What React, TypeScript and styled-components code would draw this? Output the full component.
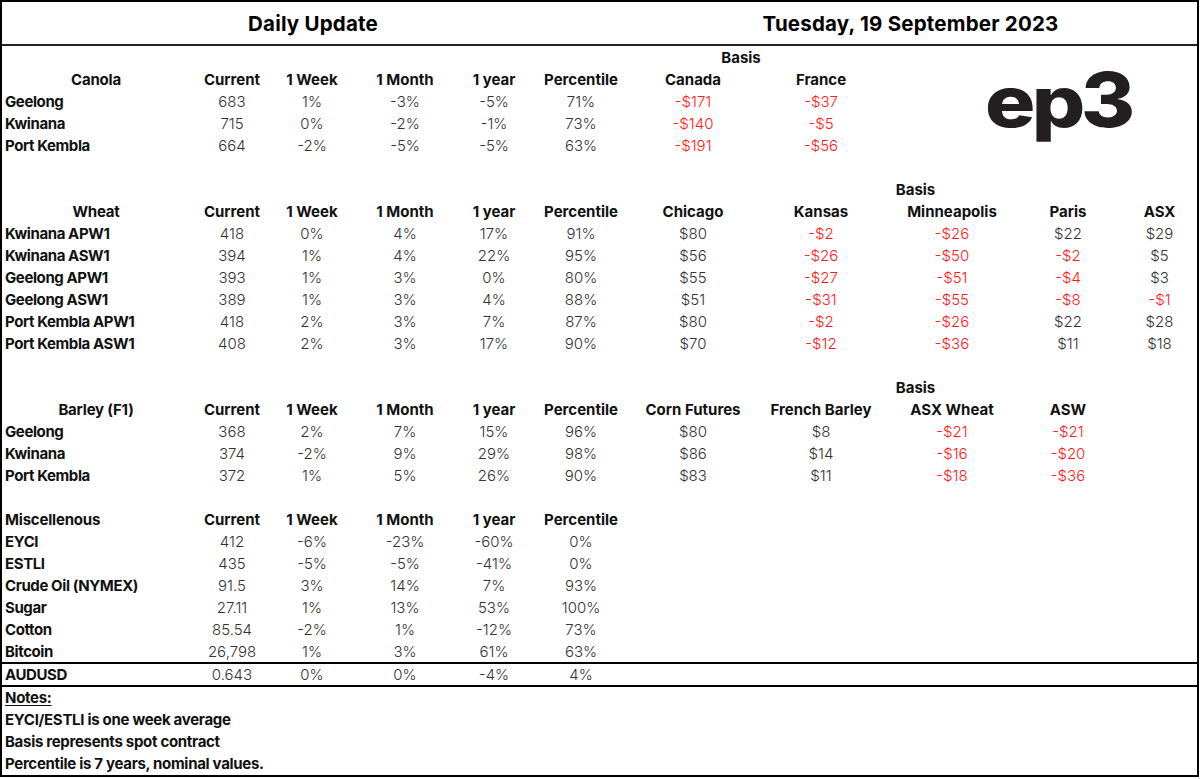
import styled, { createGlobalStyle } from "styled-components";

const GlobalStyle = createGlobalStyle`
    html, body {
        margin: 0;
        padding: 0;
        background: #ffffff;
    }
    body {
        font-family: Inter, "Liberation Sans", sans-serif;
        color: #111;
    }
`;

const COLS = "188px 84px 76px 110px 68px 106px 118px 138px 124px 108px 75px";

const Sheet = styled.div`
    width: 1199px;
    box-sizing: border-box;
    border: 2px solid #000;
`;

const TitleBar = styled.div`
    display: grid;
    grid-template-columns: 622px 1fr;
    height: 42px;
    align-items: center;
    border-bottom: 2px solid #222;
`;

const Title = styled.div`
    text-align: center;
    font-weight: 700;
    font-size: 20.5px;
    letter-spacing: 0.2px;
    color: #000;
`;

const Section = styled.div`
    display: grid;
    grid-template-columns: ${COLS};
    grid-auto-rows: 22px;
    align-items: center;
`;

const Gap = styled.div`
    grid-column: 1 / span 8;
`;

const BasisTitle = styled.div<{ $span: string; $shift?: number }>`
    grid-column: ${(p) => p.$span};
    text-align: center;
    font-weight: 700;
    font-size: 15px;
    padding-right: ${(p) => p.$shift ?? 0}px;
`;

const RowLabel = styled.div`
    grid-column: 1;
    padding-left: 3px;
    font-weight: 700;
    font-size: 15px;
    letter-spacing: -0.4px;
    white-space: nowrap;
`;

const GroupHead = styled.div<{ $left?: boolean }>`
    grid-column: 1;
    font-weight: 700;
    font-size: 15px;
    letter-spacing: -0.2px;
    text-align: ${(p) => (p.$left ? "left" : "center")};
    padding-left: ${(p) => (p.$left ? "3px" : "0")};
    white-space: nowrap;
`;

const ColHead = styled.div`
    text-align: center;
    font-weight: 700;
    font-size: 15px;
    white-space: nowrap;
`;

const Value = styled.div<{ $neg?: boolean }>`
    text-align: center;
    font-weight: 300;
    font-size: 15px;
    color: ${(p) => (p.$neg ? "#ff1a1a" : "#333")};
    white-space: nowrap;
`;

const LogoCell = styled.div`
    grid-column: 9 / span 3;
    grid-row: 1 / span 6;
    align-self: stretch;
    display: flex;
    align-items: flex-start;
    justify-content: flex-start;
    padding-left: 95px;
    padding-top: 16px;
`;

const Logo = styled.div`
    display: flex;
    align-items: baseline;
    font-family: Inter, "DejaVu Sans", sans-serif;
    font-weight: 800;
    color: #231f20;
    line-height: 1;
`;

const LogoLetters = styled.span`
    display: inline-block;
    font-size: 70px;
    letter-spacing: -3px;
    transform: scaleX(1.2);
    transform-origin: left center;
    margin-right: 15px;
`;

const LogoDigit = styled.span`
    display: inline-block;
    font-size: 75px;
    transform: scaleX(1.1);
    transform-origin: left center;
`;

const FxRow = styled.div`
    display: grid;
    grid-template-columns: ${COLS};
    height: 21px;
    align-items: center;
    border-top: 2px solid #000;
    border-bottom: 2px solid #000;
`;

const Notes = styled.div`
    display: flex;
    flex-direction: column;
    padding-left: 3px;
`;

const NoteLine = styled.div<{ $underline?: boolean }>`
    height: 22px;
    line-height: 22px;
    font-weight: 700;
    font-size: 15px;
    letter-spacing: -0.3px;
    text-decoration: ${(p) => (p.$underline ? "underline" : "none")};
    text-underline-offset: 2px;
`;

const baseHeads = ["Current", "1 Week", "1 Month", "1 year", "Percentile"];

type Row = { name: string; vals: string[] };

const canola: Row[] = [
    { name: "Geelong", vals: ["683", "1%", "-3%", "-5%", "71%", "-$171", "-$37"] },
    { name: "Kwinana", vals: ["715", "0%", "-2%", "-1%", "73%", "-$140", "-$5"] },
    { name: "Port Kembla", vals: ["664", "-2%", "-5%", "-5%", "63%", "-$191", "-$56"] },
];

const wheat: Row[] = [
    { name: "Kwinana APW1", vals: ["418", "0%", "4%", "17%", "91%", "$80", "-$2", "-$26", "$22", "$29"] },
    { name: "Kwinana ASW1", vals: ["394", "1%", "4%", "22%", "95%", "$56", "-$26", "-$50", "-$2", "$5"] },
    { name: "Geelong APW1", vals: ["393", "1%", "3%", "0%", "80%", "$55", "-$27", "-$51", "-$4", "$3"] },
    { name: "Geelong ASW1", vals: ["389", "1%", "3%", "4%", "88%", "$51", "-$31", "-$55", "-$8", "-$1"] },
    { name: "Port Kembla APW1", vals: ["418", "2%", "3%", "7%", "87%", "$80", "-$2", "-$26", "$22", "$28"] },
    { name: "Port Kembla ASW1", vals: ["408", "2%", "3%", "17%", "90%", "$70", "-$12", "-$36", "$11", "$18"] },
];

const barley: Row[] = [
    { name: "Geelong", vals: ["368", "2%", "7%", "15%", "96%", "$80", "$8", "-$21", "-$21"] },
    { name: "Kwinana", vals: ["374", "-2%", "9%", "29%", "98%", "$86", "$14", "-$16", "-$20"] },
    { name: "Port Kembla", vals: ["372", "1%", "5%", "26%", "90%", "$83", "$11", "-$18", "-$36"] },
];

const misc: Row[] = [
    { name: "EYCI", vals: ["412", "-6%", "-23%", "-60%", "0%"] },
    { name: "ESTLI", vals: ["435", "-5%", "-5%", "-41%", "0%"] },
    { name: "Crude Oil (NYMEX)", vals: ["91.5", "3%", "14%", "7%", "93%"] },
    { name: "Sugar", vals: ["27.11", "1%", "13%", "53%", "100%"] },
    { name: "Cotton", vals: ["85.54", "-2%", "1%", "-12%", "73%"] },
    { name: "Bitcoin", vals: ["26,798", "1%", "3%", "61%", "63%"] },
];

// basis columns show negatives in red, the change columns do not
function DataRow({ row }: { row: Row }) {
    return (
        <>
            <RowLabel>{row.name}</RowLabel>
            {row.vals.map((v, i) => (
                <Value key={i} $neg={i >= 5 && v.startsWith("-")}>
                    {v}
                </Value>
            ))}
        </>
    );
}

function Heads({ group, extra, left }: { group: string; extra: string[]; left?: boolean }) {
    return (
        <>
            <GroupHead $left={left}>{group}</GroupHead>
            {[...baseHeads, ...extra].map((h) => (
                <ColHead key={h}>{h}</ColHead>
            ))}
        </>
    );
}

export default function App() {
    return (
        <>
            <GlobalStyle />
            <Sheet>
                <TitleBar>
                    <Title>Daily Update</Title>
                    <Title>Tuesday, 19 September 2023</Title>
                </TitleBar>

                <Section>
                    <BasisTitle $span="7 / span 2" $shift={42}>Basis</BasisTitle>
                    <LogoCell>
                        <Logo>
                            <LogoLetters>ep</LogoLetters>
                            <LogoDigit>3</LogoDigit>
                        </Logo>
                    </LogoCell>
                    <Heads group="Canola" extra={["Canada", "France"]} />
                    {canola.map((r) => (
                        <DataRow key={r.name} row={r} />
                    ))}
                    <Gap />
                </Section>

                <Section>
                    <BasisTitle $span="7 / span 5">Basis</BasisTitle>
                    <Heads group="Wheat" extra={["Chicago", "Kansas", "Minneapolis", "Paris", "ASX"]} />
                    {wheat.map((r) => (
                        <DataRow key={r.name} row={r} />
                    ))}
                    <Gap />
                </Section>

                <Section>
                    <BasisTitle $span="7 / span 5">Basis</BasisTitle>
                    <Heads group="Barley (F1)" extra={["Corn Futures", "French Barley", "ASX Wheat", "ASW"]} />
                    {barley.map((r) => (
                        <DataRow key={r.name} row={r} />
                    ))}
                    <Gap />
                </Section>

                <Section>
                    <Heads group="Miscellenous" extra={[]} left />
                    {misc.map((r) => (
                        <DataRow key={r.name} row={r} />
                    ))}
                </Section>

                <FxRow>
                    <RowLabel>AUDUSD</RowLabel>
                    {["0.643", "0%", "0%", "-4%", "4%"].map((v, i) => (
                        <Value key={i}>{v}</Value>
                    ))}
                </FxRow>

                <Notes>
                    <NoteLine $underline>Notes:</NoteLine>
                    <NoteLine>EYCI/ESTLI is one week average</NoteLine>
                    <NoteLine>Basis represents spot contract</NoteLine>
                    <NoteLine>Percentile is 7 years, nominal values.</NoteLine>
                </Notes>
            </Sheet>
        </>
    );
}
